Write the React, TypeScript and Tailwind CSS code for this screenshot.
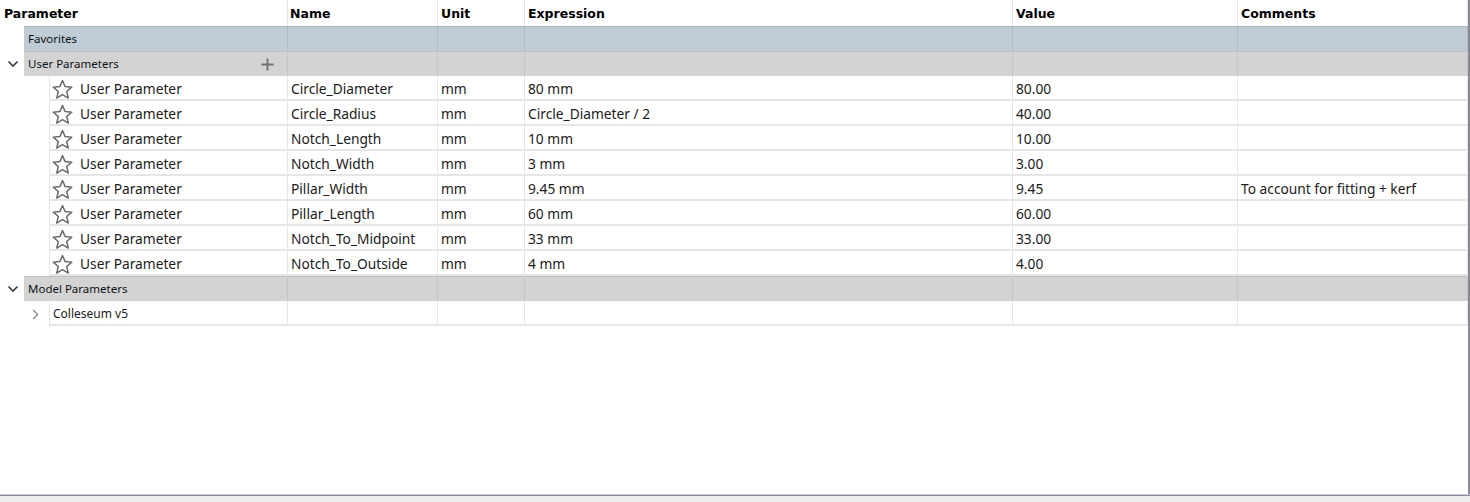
import React from "react";

const COLS = "grid grid-cols-[288px_150px_87px_488px_225px_230px]";

const rows = [
  ["Circle_Diameter", "mm", "80 mm", "80.00", ""],
  ["Circle_Radius", "mm", "Circle_Diameter / 2", "40.00", ""],
  ["Notch_Length", "mm", "10 mm", "10.00", ""],
  ["Notch_Width", "mm", "3 mm", "3.00", ""],
  ["Pillar_Width", "mm", "9.45 mm", "9.45", "To account for fitting + kerf"],
  ["Pillar_Length", "mm", "60 mm", "60.00", ""],
  ["Notch_To_Midpoint", "mm", "33 mm", "33.00", ""],
  ["Notch_To_Outside", "mm", "4 mm", "4.00", ""],
];

function Star() {
  return (
    <svg width="21" height="21" viewBox="0 0 24 23" className="shrink-0">
      <path
        d="M12 1.2 L15 8.2 L22.6 8.8 L16.8 13.8 L18.6 21.3 L12 17.3 L5.4 21.3 L7.2 13.8 L1.4 8.8 L9 8.2 Z"
        fill="none"
        stroke="#6a6a6a"
        strokeWidth="1.7"
        strokeLinejoin="round"
      />
    </svg>
  );
}

function ChevronDown() {
  return (
    <svg width="12" height="8" viewBox="0 0 12 8">
      <path d="M1.5 1.5 L6 6 L10.5 1.5" fill="none" stroke="#3a3a3a" strokeWidth="1.6" />
    </svg>
  );
}

function ChevronRight() {
  return (
    <svg width="7" height="11" viewBox="0 0 7 11">
      <path d="M1.2 1 L5.6 5.5 L1.2 10" fill="none" stroke="#8a8a8a" strokeWidth="1.3" />
    </svg>
  );
}

const hdr = "h-[26px] flex items-center pt-[2px] border-r border-[#e6e6e6] font-bold text-[12.5px] text-black";

function GroupRow({
  label,
  bg,
  top,
  sep,
  chevron,
  plus,
}: {
  label: string;
  bg: string;
  top: string;
  sep: string;
  chevron?: boolean;
  plus?: boolean;
}) {
  return (
    <div className={COLS + " h-[25px]"}>
      <div className="flex h-[25px]">
        <div className="w-[24px] flex items-center justify-center pl-[1px] bg-white">{chevron && <ChevronDown />}</div>
        <div className={`flex-1 flex items-center justify-between pl-[4px] pr-[13px] border-t border-r ${bg} ${top} ${sep}`}>
          <span className="text-[11.5px] text-[#0c1218]">{label}</span>
          {plus && (
            <svg width="13" height="13" viewBox="0 0 13 13">
              <path d="M6.5 0.5 V12.5 M0.5 6.5 H12.5" stroke="#6e6e6e" strokeWidth="1.8" />
            </svg>
          )}
        </div>
      </div>
      {[0, 1, 2, 3, 4].map((i) => (
        <div key={i} className={`h-[25px] border-t border-r ${bg} ${top} ${sep}`} />
      ))}
    </div>
  );
}

export default function App() {
  return (
    <div
      className="w-[1470px] h-[502px] bg-[#efefef] flex flex-col overflow-hidden"
      style={{ fontFamily: '"Noto Sans", "Open Sans", sans-serif' }}
    >
      <div className="flex-1 flex min-h-0">
        <div className="w-[1468px] bg-white flex flex-col">
          {/* header */}
          <div className={COLS} style={{ fontFamily: '"DejaVu Sans", sans-serif' }}>
            <div className={hdr + " pl-[4px]"}>Parameter</div>
            <div className={hdr + " pl-[2px]"}>Name</div>
            <div className={hdr + " pl-[3px]"}>Unit</div>
            <div className={hdr + " pl-[3px]"}>Expression</div>
            <div className={hdr + " pl-[3px]"}>Value</div>
            <div className={hdr + " pl-[3px]"}>Comments</div>
          </div>

          <GroupRow label="Favorites" bg="bg-[#bfccd6]" top="border-t-[#a8b6c0]" sep="border-r-[#b0bdc7]" />
          <GroupRow
            label="User Parameters"
            bg="bg-[#d3d3d3]"
            top="border-t-[#bfbfbf]"
            sep="border-r-[#c6c6c6]"
            chevron
            plus
          />

          {rows.map((r, idx) => (
            <div key={idx} className={COLS + " h-[25px] text-[13.75px] text-[#1a1a1a]"}>
              <div className="flex h-[25px]">
                <div className="w-[49px] bg-white" />
                <div className="flex-1 flex items-center gap-[7px] pl-[2px] pt-[3px] border-l border-b-2 border-r border-[#e6e6e6]">
                  <Star />
                  <span>User Parameter</span>
                </div>
              </div>
              {r.map((c, j) => (
                <div
                  key={j}
                  className="h-[25px] flex items-center pl-[3px] pt-[3px] border-b-2 border-r border-[#e6e6e6] whitespace-nowrap"
                >
                  {c}
                </div>
              ))}
            </div>
          ))}

          <GroupRow
            label="Model Parameters"
            bg="bg-[#d3d3d3]"
            top="border-t-[#bfbfbf]"
            sep="border-r-[#c6c6c6]"
            chevron
          />

          <div className={COLS + " h-[25px]"}>
            <div className="flex h-[25px]">
              <div className="w-[49px] bg-white flex items-center pl-[32px] pt-[1px]">
                <ChevronRight />
              </div>
              <div className="flex-1 flex items-center pl-[3px] pt-[2px] border-l border-b-2 border-r border-[#e6e6e6] text-[12px] text-[#1c1c1c]">
                Colleseum v5
              </div>
            </div>
            {[0, 1, 2, 3, 4].map((i) => (
              <div key={i} className="h-[25px] border-b-2 border-r border-[#e6e6e6]" />
            ))}
          </div>
          <div className="flex-1" />
        </div>
        <div className="w-[2px] bg-[#8a8a96]" />
      </div>
      <div className="h-[1px] bg-[#c9ccd6]" />
      <div className="h-[1px] bg-[#8a8c9c]" />
      <div className="h-[6px] bg-[#efefef]" />
    </div>
  );
}
